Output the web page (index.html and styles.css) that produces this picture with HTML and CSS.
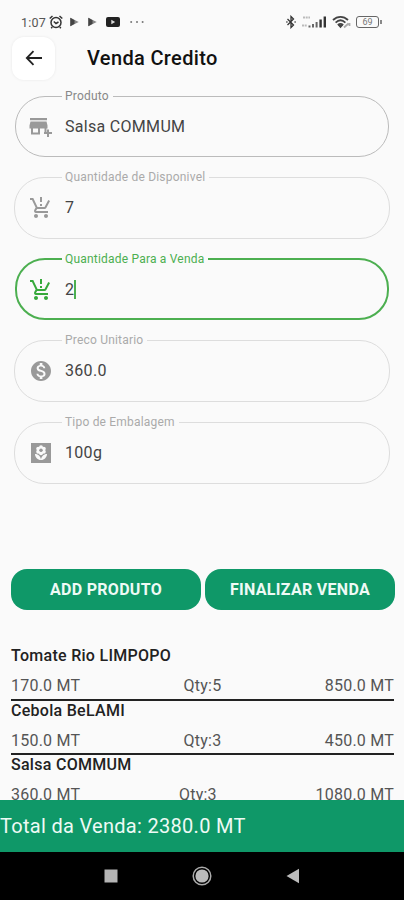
FILE: index.html
```html
<!DOCTYPE html>
<html lang="pt">
<head>
  <meta charset="UTF-8">
  <meta name="viewport" content="width=device-width, initial-scale=1.0">
  <title>Venda Credito</title>
  <link rel="stylesheet" href="styles.css">
</head>
<body>

  <!-- Icons used more than once -->
  <svg class="sprite" width="0" height="0">
    <symbol id="icon-cart" viewBox="0 0 24 24">
      <path d="M13 10h-2V8h2v2zm0-4h-2V1h2v5zM7 18c-1.1 0-1.99.9-1.99 2S5.9 22 7 22s2-.9 2-2-.9-2-2-2zm10 0c-1.1 0-1.99.9-1.99 2s.89 2 1.99 2 2-.9 2-2-.9-2-2-2zm-8.9-5h7.45c.75 0 1.41-.41 1.75-1.03L21 4.96 19.25 4l-3.7 7H8.53L4.27 2H1v2h2l3.6 7.59-1.35 2.44C4.52 15.37 5.48 17 7 17h12v-2H7l1.1-2z"/>
    </symbol>
    <symbol id="icon-play" viewBox="0 0 12 12">
      <path d="M1 1l10 5-10 5z" fill="#888"/>
      <path d="M1 1l5 3v4l-5 3z" fill="#444"/>
    </symbol>
  </svg>

  <!-- Status bar -->
  <div class="status-bar">
    <div class="status-left">
      <span class="time">1:07</span>
      <svg class="alarm" width="14" height="14" viewBox="0 0 14 14" fill="none" stroke="#333" stroke-width="1.5">
        <circle cx="7" cy="7.5" r="5"/>
        <path d="M.7 3.5L3.5 1M13.3 3.5L10.5 1M4.8 6.5L7 8.5l2.5-1.5M3.2 12l-1 1.3M10.8 12l1 1.3"/>
      </svg>
      <svg class="play" width="11" height="10"><use href="#icon-play"/></svg>
      <svg class="play" width="11" height="10"><use href="#icon-play"/></svg>
      <svg class="video" width="14" height="10" viewBox="0 0 14 10">
        <rect width="14" height="10" rx="2" fill="#222"/>
        <path d="M5.3 2.8L9.2 5 5.3 7.2z" fill="#ddd"/>
      </svg>
      <svg class="dots" width="14" height="4" viewBox="0 0 14 4" fill="#777">
        <circle cx="1.2" cy="2" r="1"/><circle cx="7" cy="2" r="1"/><circle cx="12.6" cy="2" r="1"/>
      </svg>
    </div>
    <div class="status-right">
      <svg width="10" height="14" viewBox="0 0 10 14" fill="none" stroke="#333" stroke-width="1.3">
        <path d="M1.5 4l6 6L5 12.5v-11L7.5 4l-6 6"/>
        <path d="M.3 7h1.2M8.5 7h1.2"/>
      </svg>
      <svg width="25" height="14" viewBox="0 0 25 14">
        <path d="M1 2.5h7M0 10.5h5" stroke="#bbb" stroke-width="2" stroke-dasharray="2 .7"/>
        <path d="M6.5 10.5h2v2h-2zM10 9h2v3.5h-2zM13.6 7h2v5.5h-2z" fill="#666"/>
        <path d="M17.4 4.5h2.4v8h-2.4zM21.6 1.5h2.4v11h-2.4z" fill="#333"/>
      </svg>
      <svg width="19" height="14" viewBox="0 0 19 14" fill="none" stroke="#444" stroke-width="1.8">
        <path d="M1 5c4.5-4.3 10.5-4.3 15 0M3.6 7.6c3-2.8 6.800-2.8 9.8 0M6 10c1.7-1.5 3.3-1.5 5 0"/>
        <path d="M7.2 10.5h2.6l-1.3 1.5z" fill="#444"/>
        <path d="M12 12.5l4.5-4M17.5 8v3" stroke="#aaa"/>
      </svg>
      <div class="battery"><span>69</span></div>
    </div>
  </div>

  <!-- Header -->
  <header class="header">
    <button class="back" type="button" aria-label="Voltar">
      <svg width="18" height="16" viewBox="0 0 18 16" fill="none" stroke="#222" stroke-width="1.8">
        <path d="M17 8H2M8.5 1.2L1.8 8l6.7 6.8"/>
      </svg>
    </button>
    <h1 class="title">Venda Credito</h1>
  </header>

  <!-- Form -->
  <form class="form">
    <fieldset class="field field-dark">
      <legend>Produto</legend>
      <svg class="icon" viewBox="0 0 24 24">
        <path d="M1 3h17v2.200H1zM1.500 6.500h16l1 4v3H.5v-3z"/>
        <path d="M2 13h2v4.500h5V13h2v6.500H2zM15.500 13h2v4h-2zM18 14.500h2V17h3v2h-3v3h-2v-3h-3v-2h3z"/>
      </svg>
      <span class="value">Salsa COMMUM</span>
    </fieldset>
    <fieldset class="field">
      <legend>Quantidade de Disponivel</legend>
      <svg class="icon"><use href="#icon-cart"/></svg>
      <span class="value">7</span>
    </fieldset>
    <fieldset class="field field-active">
      <legend>Quantidade Para a Venda</legend>
      <svg class="icon"><use href="#icon-cart"/></svg>
      <span class="value">2</span><span class="cursor"></span>
    </fieldset>
    <fieldset class="field">
      <legend>Preco Unitario</legend>
      <svg class="icon" viewBox="0 0 24 24"><path d="M12 2C6.48 2 2 6.48 2 12s4.48 10 10 10 10-4.48 10-10S17.52 2 12 2zm1.41 16.09V20h-2.67v-1.93c-1.71-.36-3.16-1.46-3.27-3.4h1.96c.1 1.05.82 1.87 2.65 1.87 1.96 0 2.4-.98 2.4-1.59 0-.83-.44-1.61-2.67-2.14-2.48-.6-4.18-1.62-4.18-3.67 0-1.72 1.39-2.84 3.11-3.21V4h2.67v1.95c1.86.45 2.79 1.86 2.85 3.39H14.3c-.05-1.11-.64-1.87-2.22-1.87-1.5 0-2.4.68-2.4 1.64 0 .84.65 1.39 2.67 1.91s4.18 1.39 4.18 3.91c-.01 1.83-1.38 2.83-3.12 3.16z"/></svg>
      <span class="value">360.0</span>
    </fieldset>
    <fieldset class="field">
      <legend>Tipo de Embalagem</legend>
      <svg class="icon" viewBox="0 0 24 24">
        <path d="M2 2h20v20H2z"/>
        <g fill="#fafafa">
          <circle cx="12" cy="6.3" r="2"/><circle cx="9.2" cy="7.8" r="2"/><circle cx="14.8" cy="7.8" r="2"/>
          <circle cx="9.2" cy="10.8" r="2"/><circle cx="14.8" cy="10.8" r="2"/><circle cx="12" cy="12.2" r="2"/>
          <path d="M12 19c0-3.3-2.7-6-6-6 0 3.3 2.7 6 6 6zM12 19c3.3 0 6-2.7 6-6-3.3 0-6 2.7-6 6z"/>
        </g>
        <circle cx="12" cy="9.3" r="1.7"/>
      </svg>
      <span class="value">100g</span>
    </fieldset>
  </form>

  <div class="actions">
    <button class="btn" type="button">ADD PRODUTO</button>
    <button class="btn" type="button">FINALIZAR VENDA</button>
  </div>

  <!-- Sale items -->
  <div class="items">
    <div class="item">
      <p class="item-name">Tomate Rio LIMPOPO</p>
      <div class="item-row"><span>170.0 MT</span><span>Qty:5</span><span>850.0 MT</span></div>
    </div>
    <div class="item">
      <p class="item-name">Cebola BeLAMI</p>
      <div class="item-row"><span>150.0 MT</span><span>Qty:3</span><span>450.0 MT</span></div>
    </div>
    <div class="item">
      <p class="item-name">Salsa COMMUM</p>
      <div class="item-row"><span>360.0 MT</span><span>Qty:3</span><span>1080.0 MT</span></div>
    </div>
  </div>

  <div class="total">Total da Venda: 2380.0 MT</div>

  <!-- Android navigation -->
  <nav class="nav-bar">
    <svg width="14" height="14" viewBox="0 0 14 14"><path d="M.5.5h13v13H.5z" fill="#b5b5b5"/></svg>
    <svg width="20" height="20" viewBox="0 0 20 20">
      <circle cx="10" cy="10" r="8.8" fill="none" stroke="#aaa" stroke-width="1.5"/>
      <circle cx="10" cy="10" r="6.6" fill="#bbb"/>
    </svg>
    <svg width="14" height="16" viewBox="0 0 14 16"><path d="M.5 8L13 .8v14.4z" fill="#bbb"/></svg>
  </nav>

</body>
</html>
```
FILE: styles.css
```css
* {
  box-sizing: border-box;
}

body {
  margin: 0;
  height: 900px;
  display: flex;
  flex-direction: column;
  overflow: hidden;
  font-family: Roboto, sans-serif;
  background: #fafafa;
  color: #222;
}

svg {
  display: block;
  flex-shrink: 0;
}

.sprite {
  position: absolute;
}

/* Status bar */
.status-bar {
  height: 37px;
  padding: 7px 21px 0 21px;
  display: flex;
  align-items: center;
  justify-content: space-between;
}

.status-left,
.status-right {
  display: flex;
  align-items: center;
}

.time {
  width: 28px;
  font-size: 12.5px;
  letter-spacing: 0.2px;
  color: #555;
}

.play {
  margin-left: 7px;
}

.alarm + .play {
  margin-left: 6px;
}

.video {
  margin-left: 8px;
}

.dots {
  margin-left: 10px;
}

.status-right {
  gap: 5px;
}

.status-right svg:first-child {
  margin-right: 1px;
}

.battery {
  position: relative;
  width: 23px;
  height: 12px;
  margin: 0 4px 0 0;
  border: 1.5px solid #666;
  border-radius: 3px;
  font-size: 9px;
  line-height: 10px;
  text-align: center;
  color: #777;
}

.battery::after {
  content: "";
  position: absolute;
  right: -4px;
  top: 3px;
  width: 2px;
  height: 4px;
  background: #888;
}

/* Header */
.header {
  height: 52px;
  padding-left: 12px;
  display: flex;
  align-items: flex-start;
}

.back {
  width: 43px;
  height: 43px;
  padding: 0 0 1px;
  display: flex;
  align-items: center;
  justify-content: center;
  background: #fff;
  border: none;
  border-radius: 12px;
  box-shadow: 0 0 3px rgba(0, 0, 0, 0.08);
}

.title {
  margin: 0 0 0 32px;
  font-size: 20px;
  font-weight: 500;
  line-height: 43px;
  letter-spacing: 0.35px;
  color: #111;
}

/* Form */
.form {
  height: 480px;
  padding: 0 14px;
  display: flex;
  flex-direction: column;
  gap: 13px;
}

.field {
  height: 69px;
  margin: 0;
  padding: 11px 0 0 14px;
  min-width: 0;
  display: flex;
  align-items: center;
  border: 1px solid #ddd;
  border-radius: 30px;
}

.field legend {
  height: 14px;
  margin-left: 33px;
  padding: 0 4px 0 3px;
  font-size: 12px;
  line-height: 15px;
  letter-spacing: 0.2px;
  color: #aaa;
}

.field-dark,
.field-active {
  height: 68px;
  margin: 0 1px;
  padding-left: 13px;
}

.field-dark {
  border-color: #bbb;
}

.field-dark legend {
  color: #888;
}

.field-active {
  border: 2px solid #4caf50;
  padding-left: 12px;
}

.field-active legend {
  color: #4caf50;
}

.icon {
  width: 24px;
  height: 24px;
  margin: 1px 12.5px 0 -0.5px;
  fill: #999;
}

.field-active .icon {
  fill: #36a93b;
}

.value {
  font-size: 16px;
  line-height: 20px;
  letter-spacing: 0.3px;
  color: #444;
}

.cursor {
  width: 2px;
  height: 19px;
  background: #4caf50;
}

/* Buttons */
.actions {
  height: 41px;
  margin: 0 9px 0 11px;
  display: flex;
  gap: 4px;
}

.btn {
  flex: 1;
  padding: 0;
  font-family: inherit;
  font-size: 16px;
  font-weight: 700;
  letter-spacing: 0.3px;
  color: #eefaf5;
  background: #0f9868;
  border: none;
  border-radius: 16px;
}

/* Items */
.items {
  height: 190px;
  padding: 36px 10px 0 11px;
  overflow: hidden;
}

.item {
  height: 54.6px;
  border-bottom: 2.5px solid #222;
}

.item-name {
  margin: 0;
  font-size: 16px;
  font-weight: 500;
  line-height: 20px;
  letter-spacing: 0.28px;
  color: #222;
}

.item-row {
  margin-top: 10px;
  display: flex;
  justify-content: space-between;
  font-size: 16px;
  line-height: 20px;
  letter-spacing: 0.22px;
  color: #555;
}

/* Total */
.total {
  height: 52px;
  font-size: 20px;
  line-height: 52px;
  letter-spacing: 0.3px;
  color: #eefaf5;
  background: #0f9868;
}

.nav-bar {
  height: 48px;
  padding: 0 104px;
  display: flex;
  align-items: center;
  justify-content: space-between;
  background: #000;
}
```
